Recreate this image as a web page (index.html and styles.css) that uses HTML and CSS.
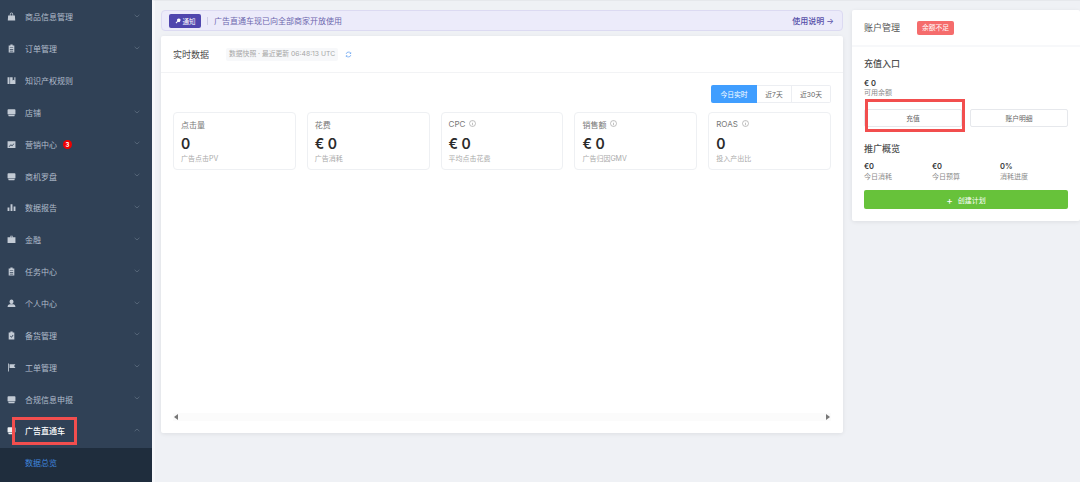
FILE: index.html
```html
<!DOCTYPE html>
<html lang="zh-CN">
<head>
    <meta charset="UTF-8">
    <title>广告直通车</title>
    <link rel="stylesheet" href="styles.css">
</head>
<body>
    <svg class="defs" width="0" height="0">
        <symbol id="i-bag" viewBox="0 0 16 16"><path d="M5 6V4a3 3 0 0 1 6 0v2h-1.3V4a1.7 1.7 0 0 0-3.4 0v2zM2 6h12l.6 9H1.400z"/></symbol>
        <symbol id="i-clip" viewBox="0 0 16 16"><path fill-rule="evenodd" d="M6 1h4v1.500h3V15H3V2.500h3zM5 6v1.300h6V6zm0 3v1.300h6V9zm0 3v1.300h6V12z"/></symbol>
        <symbol id="i-book" viewBox="0 0 16 16"><path d="M1 2h3.500v12H1zM5.500 2H10v6l1.700-1.200L13 8V2h2v12H5.500z"/></symbol>
        <symbol id="i-screen" viewBox="0 0 16 16"><path d="M2.500 2h11A1.500 1.500 0 0 1 15 3.500V11H1V3.500A1.500 1.500 0 0 1 2.500 2zM2 12h12l-1 2.500H3z"/></symbol>
        <symbol id="i-chart" viewBox="0 0 16 16"><path fill-rule="evenodd" d="M1 2h14v12H1zM3 11.500l.8.8 3.200-3 2 1.700 4-4.200-.8-.8-3.300 3.400-1.900-1.700z"/></symbol>
        <symbol id="i-bars" viewBox="0 0 16 16"><path d="M1 8h3.300v6H1zM6.300 2h3.400v12H6.300zM11.700 6H15v8h-3.300z"/></symbol>
        <symbol id="i-bank" viewBox="0 0 16 16"><path d="M6 1.500h4V4h5v10H1V4h5zM7.200 2.700V4h1.600V2.700z"/></symbol>
        <symbol id="i-user" viewBox="0 0 16 16"><path d="M8 1a3.500 3.500 0 0 1 3.500 3.500v1a3.500 3.500 0 0 1-7 0v-1A3.500 3.500 0 0 1 8 1zM5 9.500h6c2.200.4 3.800 2 4 4.500H1c.2-2.500 1.800-4.100 4-4.500z"/></symbol>
        <symbol id="i-check" viewBox="0 0 16 16"><path fill-rule="evenodd" d="M6 1h4v1.500h3V15H3V2.500h3zM5 9l3 3 3.500-4.500-1-.8L7.800 10.200 5.900 8.300z"/></symbol>
        <symbol id="i-flag" viewBox="0 0 16 16"><path d="M2 1h1.500v14H2zM4.500 2H15l-2.500 3.500L15 9H4.500z"/></symbol>
        <symbol id="i-down" viewBox="0 0 10 6"><path d="M1 1l4 3.600L9 1" fill="none" stroke="currentColor" stroke-width="0.800"/></symbol>
        <symbol id="i-up" viewBox="0 0 10 6"><path d="M1 5l4-3.600L9 5" fill="none" stroke="currentColor" stroke-width="0.800"/></symbol>
        <symbol id="i-info" viewBox="0 0 14 14"><circle cx="7" cy="7" r="6" fill="none" stroke="currentColor" stroke-width="1.200"/><path d="M6.400 6h1.200v4.500H6.400zM6.400 3.500h1.200v1.200H6.400z" fill="currentColor"/></symbol>
    </svg>

    <div class="page">
        <aside class="sidebar">
            <div class="nav-item"><svg class="nav-icon"><use href="#i-bag"/></svg><span>商品信息管理</span><svg class="chev"><use href="#i-down"/></svg></div>
            <div class="nav-item"><svg class="nav-icon"><use href="#i-clip"/></svg><span>订单管理</span><svg class="chev"><use href="#i-down"/></svg></div>
            <div class="nav-item"><svg class="nav-icon"><use href="#i-book"/></svg><span>知识产权规则</span></div>
            <div class="nav-item"><svg class="nav-icon"><use href="#i-screen"/></svg><span>店铺</span><svg class="chev"><use href="#i-down"/></svg></div>
            <div class="nav-item"><svg class="nav-icon"><use href="#i-chart"/></svg><span>营销中心</span><b class="count">3</b><svg class="chev"><use href="#i-down"/></svg></div>
            <div class="nav-item"><svg class="nav-icon"><use href="#i-screen"/></svg><span>商机罗盘</span><svg class="chev"><use href="#i-down"/></svg></div>
            <div class="nav-item"><svg class="nav-icon"><use href="#i-bars"/></svg><span>数据报告</span><svg class="chev"><use href="#i-down"/></svg></div>
            <div class="nav-item"><svg class="nav-icon"><use href="#i-bank"/></svg><span>金融</span><svg class="chev"><use href="#i-down"/></svg></div>
            <div class="nav-item"><svg class="nav-icon"><use href="#i-clip"/></svg><span>任务中心</span><svg class="chev"><use href="#i-down"/></svg></div>
            <div class="nav-item"><svg class="nav-icon"><use href="#i-user"/></svg><span>个人中心</span><svg class="chev"><use href="#i-down"/></svg></div>
            <div class="nav-item"><svg class="nav-icon"><use href="#i-check"/></svg><span>备货管理</span><svg class="chev"><use href="#i-down"/></svg></div>
            <div class="nav-item"><svg class="nav-icon"><use href="#i-flag"/></svg><span>工单管理</span><svg class="chev"><use href="#i-down"/></svg></div>
            <div class="nav-item"><svg class="nav-icon"><use href="#i-screen"/></svg><span>合规信息申报</span><svg class="chev"><use href="#i-down"/></svg></div>
            <div class="nav-item active"><svg class="nav-icon"><use href="#i-screen"/></svg><span>广告直通车</span><svg class="chev"><use href="#i-up"/></svg><i class="mark mark-nav"></i></div>
            <div class="sub-nav"><span>数据总览</span></div>
        </aside>

        <main class="content">
            <section class="left-col">
                <div class="notice">
                    <span class="notice-tag">
                        <svg class="key" viewBox="0 0 12 12"><path d="M7.500 1a3.500 3.500 0 1 1-1.700 6.600L2.600 10.800 1.200 9.400l3.200-3.200A3.500 3.500 0 0 1 7.500 1z"/></svg>通知
                    </span>
                    <span class="notice-sep"></span>
                    <span class="notice-text">广告直通车现已向全部商家开放使用</span>
                    <span class="notice-link">使用说明 <em>→</em></span>
                </div>

                <div class="card data-card">
                    <div class="card-head">
                        <h2>实时数据</h2>
                        <span class="snapshot">数据快照 · 最近更新 06:48:13 UTC</span>
                        <svg class="refresh" viewBox="0 0 12 12"><path d="M2 5a4.200 4.200 0 0 1 7.500-1.500M10 7a4.200 4.200 0 0 1-7.500 1.500" fill="none" stroke="#5b9cf0" stroke-width="1.200"/><path d="M10.500 1.500v3h-3zM1.500 10.500v-3h3z" fill="#5b9cf0"/></svg>
                    </div>
                    <div class="card-body">
                        <div class="tabs">
                            <span class="tab on">今日实时</span>
                            <span class="tab">近7天</span>
                            <span class="tab">近30天</span>
                        </div>
                        <div class="kpis">
                            <div class="kpi">
                                <div class="kpi-label">点击量</div>
                                <div class="kpi-value">0</div>
                                <div class="kpi-sub">广告点击PV</div>
                            </div>
                            <div class="kpi">
                                <div class="kpi-label">花费</div>
                                <div class="kpi-value">€ 0</div>
                                <div class="kpi-sub">广告消耗</div>
                            </div>
                            <div class="kpi">
                                <div class="kpi-label">CPC <svg class="info"><use href="#i-info"/></svg></div>
                                <div class="kpi-value">€ 0</div>
                                <div class="kpi-sub">平均点击花费</div>
                            </div>
                            <div class="kpi">
                                <div class="kpi-label">销售额 <svg class="info"><use href="#i-info"/></svg></div>
                                <div class="kpi-value">€ 0</div>
                                <div class="kpi-sub">广告归因GMV</div>
                            </div>
                            <div class="kpi">
                                <div class="kpi-label">ROAS <svg class="info"><use href="#i-info"/></svg></div>
                                <div class="kpi-value">0</div>
                                <div class="kpi-sub">投入产出比</div>
                            </div>
                        </div>
                        <div class="scrollbar">
                            <i class="arrow-left"></i>
                            <i class="arrow-right"></i>
                        </div>
                    </div>
                </div>
            </section>

            <section class="card account-card">
                <div class="account-head">
                    <h2>账户管理</h2>
                    <span class="low-badge">余额不足</span>
                </div>
                <div class="account-body">
                    <h3>充值入口</h3>
                    <div class="balance">€ 0</div>
                    <div class="small-label">可用余额</div>
                    <div class="btn-row">
                        <button class="btn">充值</button>
                        <button class="btn">账户明细</button>
                        <i class="mark mark-btn"></i>
                    </div>
                    <h3 class="overview-title">推广概览</h3>
                    <div class="stats">
                        <div><strong>€0</strong><div class="small-label">今日消耗</div></div>
                        <div><strong>€0</strong><div class="small-label">今日预算</div></div>
                        <div><strong>0%</strong><div class="small-label">消耗进度</div></div>
                    </div>
                    <button class="btn-create"><em>+</em>创建计划</button>
                </div>
            </section>
        </main>
    </div>
</body>
</html>
```

FILE: styles.css
```css
* {
    box-sizing: border-box;
}
html, body {
    margin: 0;
    height: 100%;
    overflow: hidden;
}
body {
    font-family: Inter, "Noto Sans CJK SC", sans-serif;
    background-color: #eff1f5;
    color: #333;
}
h2, h3 {
    margin: 0;
    font-weight: 500;
}
.defs {
    position: absolute;
}
.page {
    display: flex;
    height: 482px;
}

/* sidebar */
.sidebar {
    width: 152px;
    flex: none;
    background-color: #304156;
    color: #b0bccb;
    font-size: 8px;
    padding-top: 1px;
}
.nav-item {
    position: relative;
    display: flex;
    align-items: center;
    height: 31.85px;
    padding-left: 7px;
}
.nav-icon {
    width: 9px;
    height: 9px;
    margin-right: 9px;
    fill: #c3cbd5;
    flex: none;
}
.chev {
    position: absolute;
    right: 12px;
    top: 13px;
    width: 6px;
    height: 4px;
    color: #7d8b9c;
}
.count {
    margin-left: 6px;
    width: 9px;
    height: 9px;
    border-radius: 50%;
    background-color: #f00000;
    color: #fff;
    font-size: 6px;
    line-height: 9px;
    text-align: center;
}
.nav-item.active {
    color: #fff;
    font-weight: 500;
}
.nav-item.active .nav-icon {
    fill: #eef1f4;
}
.sub-nav {
    height: 36px;
    margin-top: 1px;
    padding: 9px 0 0 25px;
    background-color: #1f2d3d;
    color: #3f85dd;
    font-size: 8px;
    line-height: 13px;
}
.mark {
    position: absolute;
    border: 3px solid #f24e4e;
    pointer-events: none;
}
.mark-nav {
    left: 12px;
    top: 2px;
    width: 65px;
    height: 28px;
}
.mark-btn {
    left: 1px;
    top: -10px;
    width: 100px;
    height: 33px;
}

/* main area */
.content {
    flex: 1;
    min-width: 0;
    display: flex;
    gap: 9px;
    padding: 9px 0 0 6px;
    border-left: 3px solid #f6f7fa;
    border-top: 1px solid #e6e8ec;
    align-items: flex-start;
}
.left-col {
    width: 682px;
    flex: none;
}
.notice {
    display: flex;
    align-items: center;
    height: 21px;
    padding: 0 8px 0 7px;
    background-color: #ecebfa;
    border: 1px solid #dcdaf2;
    border-radius: 4px;
    font-size: 8px;
    color: #6d67ae;
}
.notice-tag {
    display: flex;
    align-items: center;
    justify-content: center;
    gap: 2px;
    width: 32px;
    height: 14px;
    background-color: #4f46ae;
    border-radius: 2px;
    color: #fff;
    font-size: 6.500px;
}
.key {
    width: 6px;
    height: 6px;
    fill: #fff;
}
.notice-sep {
    width: 1px;
    height: 8px;
    margin: 0 6px;
    background-color: #cfcde6;
}
.notice-link {
    margin-left: auto;
    color: #574fa8;
    font-weight: 500;
}
.notice-link em {
    font-style: normal;
    font-weight: 400;
}
.card {
    background-color: #fff;
    border-radius: 2px;
    box-shadow: 0 1px 4px rgba(0, 0, 0, 0.08);
}
.data-card {
    margin-top: 5px;
    height: 397px;
}
.card-head {
    display: flex;
    align-items: center;
    height: 37px;
    padding-left: 12px;
    border-bottom: 1px solid #f2f3f5;
}
.card-head h2 {
    font-size: 9px;
    font-weight: 400;
    color: #4a4a4a;
}
.snapshot {
    margin-left: 17px;
    padding: 0 3px;
    height: 13px;
    line-height: 12px;
    background-color: #f7f8fa;
    border-radius: 2px;
    font-size: 6.800px;
    color: #a6a6a6;
}
.refresh {
    width: 7px;
    height: 7px;
    margin-left: 7px;
}
.card-body {
    padding: 12px 12px 0;
}
.tabs {
    display: flex;
    justify-content: flex-end;
    height: 18px;
    font-size: 6.800px;
}
.tab {
    display: flex;
    align-items: center;
    justify-content: center;
    width: 35px;
    border: 1px solid #eceef2;
    border-left: 0;
    color: #666;
}
.tab.on {
    width: 46px;
    border: 0;
    border-radius: 2px 0 0 2px;
    background-color: #409eff;
    color: #fff;
}
.tab:last-child {
    width: 39px;
    border-radius: 0 2px 2px 0;
}
.kpis {
    display: grid;
    grid-template-columns: repeat(5, 1fr);
    gap: 11px;
    margin-top: 9px;
}
.kpi {
    height: 58px;
    padding: 5px 7px;
    border: 1px solid #eef0f3;
    border-radius: 4px;
}
.kpi-label {
    display: flex;
    align-items: center;
    gap: 4px;
    height: 12px;
    font-size: 8px;
    color: #777;
}
.info {
    width: 7px;
    height: 7px;
    color: #999;
    margin-bottom: 1px;
}
.kpi-value {
    margin-top: 6px;
    height: 16px;
    line-height: 16px;
    font-size: 14px;
    font-weight: 600;
    color: #2b2b2b;
}
.kpi-sub {
    margin-top: 2px;
    font-size: 7px;
    line-height: 10px;
    color: #aaa;
}
.scrollbar {
    display: flex;
    justify-content: space-between;
    align-items: center;
    height: 8px;
    margin-top: 243px;
    padding: 0 1px;
    background-color: #fbfbfb;
}
.arrow-left, .arrow-right {
    width: 0;
    height: 0;
    border: 3px solid transparent;
}
.arrow-left {
    border-left: 0;
    border-right: 4px solid #777;
}
.arrow-right {
    border-right: 0;
    border-left: 4px solid #777;
}

/* account panel */
.account-card {
    flex: 1;
    height: 211px;
}
.account-head {
    display: flex;
    align-items: center;
    height: 37px;
    padding-left: 12px;
    border-bottom: 2px solid #f7f8fa;
}
.account-head h2 {
    font-size: 9px;
    font-weight: 400;
    color: #555;
}
.low-badge {
    margin-left: 17px;
    width: 37px;
    height: 14px;
    line-height: 13px;
    text-align: center;
    background-color: #f56c6c;
    border-radius: 2px;
    font-size: 6.800px;
    color: #fff;
}
.account-body {
    padding: 10px 12px 0;
}
.account-body h3 {
    font-size: 9px;
    line-height: 13px;
    color: #4f4f4f;
}
.balance {
    margin-top: 9px;
    font-size: 7.500px;
    line-height: 9px;
    font-weight: 600;
    color: #333;
}
.small-label {
    font-size: 7px;
    line-height: 10px;
    color: #8a8a8a;
}
.btn-row {
    position: relative;
    display: flex;
    gap: 8px;
    margin-top: 11px;
}
.btn {
    flex: 1;
    height: 18px;
    padding: 0;
    background-color: #fff;
    border: 1px solid #e6e8ec;
    border-radius: 2px;
    font: inherit;
    font-size: 6.800px;
    color: #666;
}
.overview-title.overview-title {
    margin-top: 15px;
}
.stats {
    display: grid;
    grid-template-columns: repeat(3, 68px);
    margin-top: 7px;
}
.stats strong {
    display: block;
    font-size: 7.500px;
    line-height: 10px;
    font-weight: 600;
}
.btn-create {
    display: flex;
    align-items: center;
    justify-content: center;
    gap: 5px;
    width: 100%;
    height: 19px;
    margin-top: 8px;
    padding: 0;
    background-color: #67c23a;
    border: 0;
    border-radius: 2px;
    font: inherit;
    font-size: 7px;
    color: #fff;
}
.btn-create em {
    font-style: normal;
    font-size: 10px;
    line-height: 10px;
}
```
